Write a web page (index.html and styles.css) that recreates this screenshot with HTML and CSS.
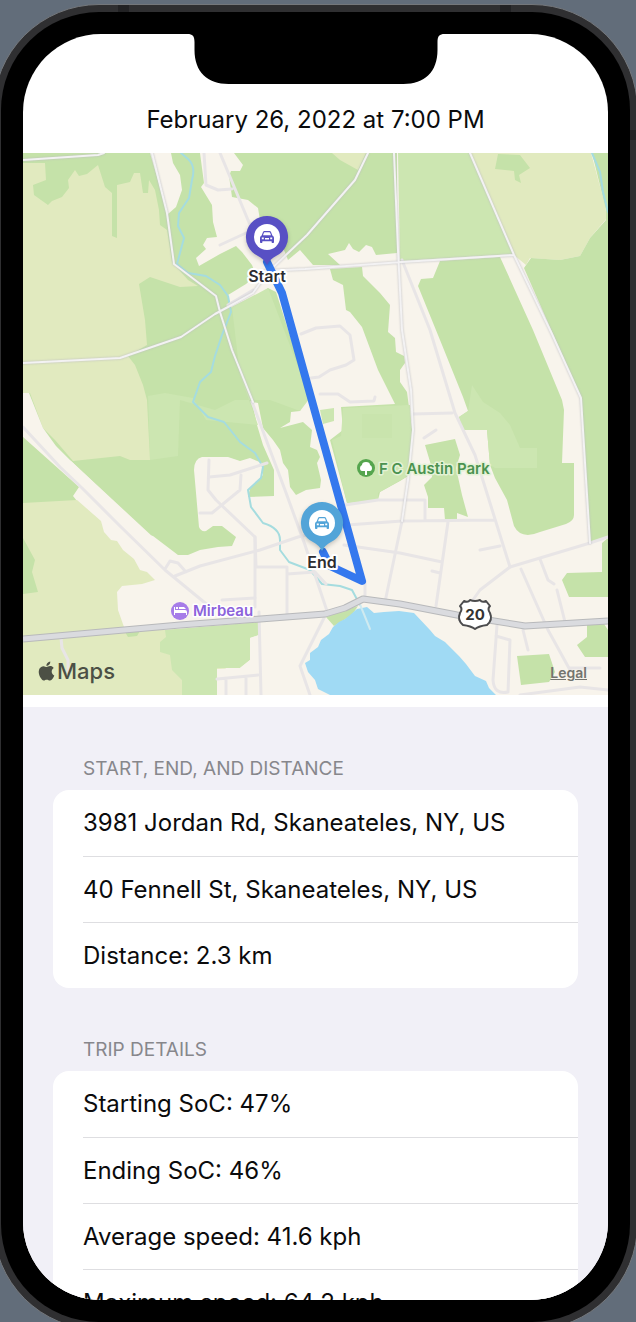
FILE: index.html
```
<!DOCTYPE html>
<html lang="en">
<head>
    <meta charset="UTF-8">
    <meta name="viewport" content="width=device-width, initial-scale=1">
    <title>Trip</title>
    <link rel="stylesheet" href="styles.css">
</head>
<body>
    <div class="phone">
        <div class="bezel">
            <main class="screen">
                <svg class="notch" viewBox="0 0 257 50" aria-hidden="true">
                    <path d="M0 0C5 0 7 2 7 8V16C7 38 20 50 41 50H216C237 50 250 38 250 16V8C250 2 252 0 257 0Z"/>
                </svg>

                <header class="trip-header">
                    <h1>February 26, 2022 at 7:00 PM</h1>
                </header>

                <div class="map">
                    <svg class="map-canvas" viewBox="23 153 585 542" role="img" aria-label="Trip route">
                        <defs>
                            <g id="car">
                                <path d="M-5.4-1.5-4-5Q-3.6-6-2.5-6H2.5Q3.6-6 4-5L5.4-1.5Q7-.8 7 .8V5.2Q7 6 6.2 6H5.4Q4.6 6 4.6 5.2V4.3H-4.6V5.2Q-4.6 6-5.4 6H-6.2Q-7 6-7 5.2V.8Q-7-.8-5.4-1.5Z"/>
                                <path class="car-cut" d="M-4-1.8-3-4.4Q-2.8-4.8-2.3-4.8H2.3Q2.8-4.8 3-4.4L4-1.8ZM-5.2.4H-3.2V2.2H-5.2ZM3.2.4H5.2V2.2H3.2ZM-2 1H2V2.4H-2Z"/>
                            </g>
                        </defs>

                        <rect class="land" x="23" y="153" width="585" height="542"/>

                        <!-- woods and fields, west side -->
                        <path class="wood" d="M23 153H150L168 214 176 207 182 190 180 175 173 163 171 153H200L204 183 201 187 212 205 213 222 217 237 207 238 203 245 206 249 196 258 199 266 220 254 236 246 242 252 252 265 256 275 246 284 228 295 230 308 250 298 253 301 258 296 268 288 276 292 310 398 303 403 300 411 291 412 290 422 280 428 303 422 312 430 310 447 317 450 320 457 317 463 321 480 320 488 306 490 296 495 290 487 288 470 283 463 280 450 273 440 263 428 258 403 252 402 257 425 263 445 274 470 274 496 248 497 250 489 263 475 262 463 250 458 240 461 228 457H202Q194 459 194 470L199 527Q201 532 206 531L213 526 222 526 236 537 232 546 218 547 200 550 188 555 178 555 153 536 149 535 71 461 23 437Z"/>
                        <path class="park" d="M148 396 165 393 193 398 206 420 258 425 240 375 232 307 268 288 310 398 300 411 270 400 235 400 215 410 180 400 178 456 150 460Z"/>
                        <path class="field" d="M23 163H45L46 180 33 185 34 195 48 205 52 201 62 197 69 188 68 180 75 170 79 176 87 174 98 165 105 187 112 193V236L117 238V185L130 182 134 173 140 173 143 193 148 193 149 180 155 190 159 210 160 225 167 230 172 262 188 280 198 286 180 287 165 282 150 277 139 284 145 320 147 345 128 356 135 365 143 385 147 400 150 460 130 460 120 456 73 461 55 440 43 428 30 393H23Z"/>
                        <path class="land" d="M23 393H29L43 428 56 446 71 461 153 537 178 556V582H155L140 572 118 547 100 522 73 500V495L79 488 23 437Z"/>
                        <path class="wood" d="M23 437 79 487 73 496 77 501 23 504Z"/>
                        <path class="field" d="M23 503 77 500 101 521 104 532 111 540 117 541 123 550 134 559 140 570 147 572 155 580 142 584 122 586 117 592 118 610 124 627 165 630 240 625 217 695H23Z"/>
                        <path class="wood" d="M23 538 35 560 32 572 38 592 23 594Z"/>
                        <path class="park" d="M165 630 259 622V635L250 638V660L240 668H217V695H182L182 680 172 670 170 655 160 652V642L166 637Z"/>
                        <path class="wood" d="M125 632 140 631 137 636 128 637Z"/>
                        <path class="land" d="M217 695V669L240 668 250 660V638L259 635V695Z"/>

                        <!-- north, centre and east -->
                        <path class="wood" d="M234 153 243 165 240 171 231 171 229 176 232 197 248 200 258 208 260 220 278 235 288 260 300 250 313 265 340 265 328 254 345 250 349 243 353 249 359 252 366 245 372 247 376 255 397 253V153Z"/>
                        <path class="field" d="M332 153 340 160 358 170 366 153Z"/>
                        <path class="wood" d="M330 269 362 267 363 276 380 293 390 305 388 332 395 338 396 352 404 356 405 363 400 370 400 382 407 392 412 430 408 476 400 481 380 492 378 500 347 503 330 440 343 430 341 407 395 404 378 370 362 327 350 312 346 310 343 285 333 280Z"/>
                        <path class="park" d="M320 410 334 408 334 421 323 424ZM343 408 410 405 412 440 408 476 378 493V500L347 503 332 440 341 436Z"/>
                        <path class="wood" d="M362 414H392V438H362Z" opacity=".5"/>
                        <path class="park" d="M398 153H470L514 254 400 261Z"/>
                        <path class="field" d="M470 153H591L605 205 607 218 590 238 580 256 560 260 530 258 526 265 514 255Z"/>
                        <path class="wood" d="M498 154 520 155 530 168 519 175 521 183 515 180 514 171 495 169Z"/>
                        <path class="wood" d="M592 153H608V537L590 543 581 398 524 268 531 258 560 260 580 256 590 238 606 220V210Z"/>
                        <path class="wood" d="M440 261 500 257 533 330 562 400 564 410 562 463H574L574 515Q574 521 566 524L540 532Q521 540 514 526L507 500 495 478 490 465 487 430 463 430 459 417 468 411 463 397 440 340 418 286 421 279 433 278Z"/>
                        <path class="park" d="M472 385 483 402 500 413 510 425 520 448H537V468H495L490 465 487 430 463 430 459 417 468 411Z"/>
                        <path class="wood" d="M425 445 455 439 460 455 456 468 462 495 468 517 457 513V520H445L444 508H428V497L424 485 432 477 431 465Z"/>
                        <path class="wood" d="M567 573 602 572V543L608 538V597H569L562 580ZM587 625 604 624 608 630V657H585L577 645 587 637ZM517 656 549 654 555 672 549 682 521 685Z"/>

                        <!-- lake and creek -->
                        <path class="wood" d="M326 617 358 606 352 615 334 626Z"/>
                        <path class="water" d="M414 613 399 611 384 612 374 613 367 607 357 609 350 615 345 619 339 622 333 627 329 634 321 640 318 647 310 653 310 660 305 663 308 672 315 680 318 689 330 695H496L489 688 486 681 475 676 466 664 459 656 445 642 435 636 430 630Z"/>
                        <path class="creek" d="M181 153 188 159Q196 166 192 180L189 198 179 213 178 226 184 238 177 264 188 273 206 276 220 285 228 296 231 312 222 335 215 356 211 372 200 382 193 402 208 417 224 422 240 442 255 453 263 467 261 478 248 490 251 507 263 523Q280 528 280 540L280 550 289 562 310 570 322 584 340 586 352 590 360 605"/>
                        <path class="creek" d="M592 153 600 172 603 192 608 212"/>
                        <path class="pier" d="M359 602 370 629"/>

                        <!-- minor roads -->
                        <g class="street">
                            <path d="M204 153 206 185 218 190 232 189M220 153 248 220 262 250M220 245 246 233M253 290 228 305M301 334 316 328 340 326 350 335 354 360 346 365 330 370 319 377 311 378M320 394 338 394 350 402 374 401 375 397"/>
                            <path d="M23 427 60 467 82 488 120 526 165 570 210 607M165 569 170 561 178 563 186 572M175 576 200 566 260 550 298 537 322 532M252 402 285 490 305 545 328 614M209 460 208 490 216 500 255 537V607"/>
                            <path d="M209 477 230 475 267 463M200 513H212L240 490 241 475M255 537 256 567H287V614M222 600 255 598M259 612 261 695M217 679 258 675M226 680V695M246 678V695M325 616 300 666 310 695M287 574 315 572 326 584"/>
                            <path d="M402 260 430 330 455 413 475 455 510 567M413 414 452 413M345 505 378 500 425 500V520M347 525 402 521 495 520M344 545 400 553 442 562M480 550 500 546M448 522 436 606M402 521 385 602M432 571 440 573M365 581V598"/>
                            <path d="M608 537 590 543 540 558 510 567 480 590 470 604M540 559 548 580 554 584M521 569 548 630 570 670M557 590 565 622M497 625 493 680Q494 695 508 692L510 640 496 636M523 630 528 650M570 668H600M520 695 580 687 608 690M436 430 424 438"/>
                            <path d="M61 638 62 648 68 660V672"/>
                        </g>
                        <g class="road">
                            <path d="M23 160 98 155 104 153M152 153 167 213 174 264 216 296 220 312 232 350 253 402M23 363 120 358 181 337 215 314 228 307 253 293 268 272 307 235 355 180 368 153M263 271 305 269 402 262 514 255M394 153 398 250 402 330 411 390 413 430 408 480 402 521M470 153 514 255 552 334 581 398 590 543"/>
                        </g>

                        <path class="highway-edge" d="M23 639 180 625 325 614 345 608 363 599 400 604 457 615 525 626 608 621"/>
                        <path class="highway" d="M23 639 180 625 325 614 345 608 363 599 400 604 457 615 525 626 608 621"/>

                        <path class="route" d="M267 262 282 293 362 581 330 566 323 552"/>

                        <!-- places -->
                        <g class="place place-park">
                            <circle cx="366" cy="468" r="9"/>
                            <path class="glyph" d="M365 475V471H362Q360 471 360 468Q360 466 362 465Q362 462 366 462Q370 462 370 465Q372 466 372 468Q372 471 370 471H367V475Z"/>
                            <text x="379" y="474">F C Austin Park</text>
                        </g>
                        <g class="place place-hotel">
                            <circle cx="180" cy="611" r="9"/>
                            <path class="glyph" d="M174 607H175V610H185Q187 610 187 612V615H186V613H175V615H174ZM176 607H178V609H176ZM179 607H184L186 609H179Z"/>
                            <text x="193" y="616">Mirbeau</text>
                        </g>
                        <g class="shield">
                            <path d="M464 601Q468 603 470 600Q475 602 480 600Q482 603 486 601L490 606Q487 609 490 613Q493 620 487 625Q479 626 475 629Q471 626 463 625Q457 620 460 613Q463 609 460 606Z"/>
                            <text x="475" y="620">20</text>
                        </g>

                        <g class="pin pin-start">
                            <path d="M267 216A21 21 0 0 1 276 256Q270 259 267 265Q264 259 258 256A21 21 0 0 1 267 216Z"/>
                            <circle cx="267" cy="237" r="13"/>
                            <use href="#car" x="267" y="237"/>
                            <text x="267" y="282">Start</text>
                        </g>
                        <g class="pin pin-end">
                            <path d="M322 502A21 21 0 0 1 331 542Q325 545 322 551Q319 545 313 542A21 21 0 0 1 322 502Z"/>
                            <circle cx="322" cy="523" r="13"/>
                            <use href="#car" x="322" y="523"/>
                            <text x="322" y="568">End</text>
                        </g>
                    </svg>
                    <div class="map-brand">
                        <svg viewBox="0 0 24 24" aria-hidden="true"><path d="M12.152 6.896c-.948 0-2.415-1.078-3.96-1.04-2.04.027-3.91 1.183-4.961 3.014-2.117 3.675-.546 9.103 1.519 12.09 1.013 1.454 2.208 3.09 3.792 3.039 1.52-.065 2.09-.987 3.935-.987 1.831 0 2.35.987 3.96.948 1.637-.026 2.676-1.48 3.676-2.948 1.156-1.688 1.636-3.325 1.662-3.415-.039-.013-3.182-1.221-3.22-4.857-.026-3.04 2.48-4.494 2.597-4.559-1.429-2.09-3.623-2.324-4.39-2.376-2-.156-3.675 1.09-4.61 1.09zM15.53 3.83c.843-1.012 1.4-2.427 1.245-3.83-1.207.052-2.662.805-3.532 1.818-.78.896-1.454 2.338-1.273 3.714 1.338.104 2.715-.688 3.559-1.701"/></svg>
                        <span>Maps</span>
                    </div>
                    <a class="map-legal" href="#legal">Legal</a>
                </div>

                <div class="details">
                    <section class="group">
                        <h2>Start, end, and distance</h2>
                        <ul>
                            <li>3981 Jordan Rd, Skaneateles, NY, US</li>
                            <li>40 Fennell St, Skaneateles, NY, US</li>
                            <li>Distance: 2.3 km</li>
                        </ul>
                    </section>
                    <section class="group">
                        <h2>Trip details</h2>
                        <ul>
                            <li>Starting SoC: 47%</li>
                            <li>Ending SoC: 46%</li>
                            <li>Average speed: 41.6 kph</li>
                            <li>Maximum speed: 64.2 kph</li>
                        </ul>
                    </section>
                </div>
            </main>
        </div>
    </div>
</body>
</html>
```
FILE: styles.css
```
:root {
    --backdrop: #626d7a;
    --frame: #2f2f31;
    --grouped: #f1f0f7;
    --separator: #dedee1;
    --secondary: #87878c;
    --land: #f8f4ec;
    --wood: #c5e2a9;
    --park: #cce6b1;
    --field: #e1eabf;
    --water: #a0daf4;
}

* { box-sizing: border-box; margin: 0; padding: 0; }

body {
    font-family: Inter, "Liberation Sans", sans-serif;
    background: var(--backdrop);
    color: #0b0b0c;
    height: 100vh;
    overflow: hidden;
}

/* the device is a little larger than the window and runs off its edges */
.phone {
    height: calc(100vh + 4px);
    margin: 4px -2px 0 -7px;
    padding: 7px;
    border: 1px solid #74777b;
    border-radius: 106px;
    background:
        linear-gradient(#222224, #222224) 124px 0 / 11px 8px no-repeat,
        linear-gradient(#222224, #222224) calc(100% - 126px) 0 / 11px 8px no-repeat,
        linear-gradient(#222224, #222224) 100% 125px / 8px 10px no-repeat,
        var(--frame);
}

.bezel {
    height: 100%;
    padding: 22px;
    border-radius: 98px;
    background: #000;
}

.screen {
    position: relative;
    height: 100%;
    overflow: hidden;
    border-radius: 78px;
    background: #fff;
}

.notch {
    position: absolute;
    top: 0;
    left: 50%;
    width: 257px;
    height: 50px;
    transform: translateX(-50%);
}

.trip-header {
    padding: 70px 16px 17px;
    text-align: center;
}

h1 {
    font-size: 24px;
    font-weight: 400;
    line-height: 32px;
}

.map {
    position: relative;
    margin-bottom: 12px;
}

.map-canvas {
    display: block;
    width: 100%;
}

.land { fill: var(--land); }
.wood { fill: var(--wood); }
.park { fill: var(--park); }
.field { fill: var(--field); }
.water { fill: var(--water); }

.creek, .pier, .street, .road, .highway, .highway-edge, .route {
    fill: none;
    stroke-linecap: round;
    stroke-linejoin: round;
}

.creek { stroke: #a5dcdf; stroke-width: 2; }
.pier { stroke: #cfeaf0; stroke-width: 2; }
.street { stroke: #e8e5e6; stroke-width: 3; }
.road { stroke: #f3f2f3; stroke-width: 2; filter: drop-shadow(0 0 1px #bcbcc2); }
.highway-edge { stroke: #b8b9bb; stroke-width: 7; stroke-linecap: butt; }
.highway { stroke: #dadbdf; stroke-width: 5; stroke-linecap: butt; }
.route { stroke: #3478ee; stroke-width: 8; }

.place { font-size: 15px; font-weight: 600; }
.place text, .pin text { stroke: #fff; stroke-width: 3; stroke-linejoin: round; paint-order: stroke; }
.place .glyph { fill: #fff; }
.place-park { fill: #55a54e; }
.place-park text { fill: #4b9250; stroke: #e4f2d5; }
.place-hotel { fill: #a67ce8; }
.place-hotel text { fill: #8c63db; }

.shield { font-size: 15px; font-weight: 700; text-anchor: middle; fill: #333; }
.shield path { fill: #fff; stroke: #4b4b4d; stroke-width: 2; stroke-linejoin: round; }

.pin { font-size: 16px; font-weight: 600; text-anchor: middle; }
.pin circle, .car-cut { fill: #fff; }
.pin text { fill: #2c2c30; stroke-width: 4; }
.pin > path { filter: drop-shadow(0 2px 2px rgba(0, 0, 0, 0.2)); }
.pin-start { fill: #5850c4; }
.pin-end { fill: #52a4d8; }

.map-brand {
    position: absolute;
    left: 14px;
    bottom: 10px;
    display: flex;
    align-items: center;
    gap: 1px;
    color: #4c5045;
    font-size: 22px;
    font-weight: 500;
    line-height: 28px;
}

.map-brand svg {
    width: 19px;
    height: 20px;
    fill: currentColor;
}

.map-legal {
    position: absolute;
    right: 21px;
    bottom: 13px;
    color: #74756f;
    font-size: 14px;
    font-weight: 600;
    line-height: 18px;
}

.details {
    display: flex;
    flex-direction: column;
    gap: 50px;
    min-height: 100%;
    padding: 50px 30px;
    background: var(--grouped);
}

.group h2 {
    padding: 0 30px 9px;
    color: var(--secondary);
    font-size: 19px;
    font-weight: 400;
    line-height: 24px;
    text-transform: uppercase;
}

.group ul {
    list-style: none;
    padding-left: 30px;
    border-radius: 16px;
    background: #fff;
}

.group li {
    height: 66px;
    font-size: 24px;
    line-height: 66px;
    white-space: nowrap;
}

.group li + li {
    border-top: 1px solid var(--separator);
}
```
